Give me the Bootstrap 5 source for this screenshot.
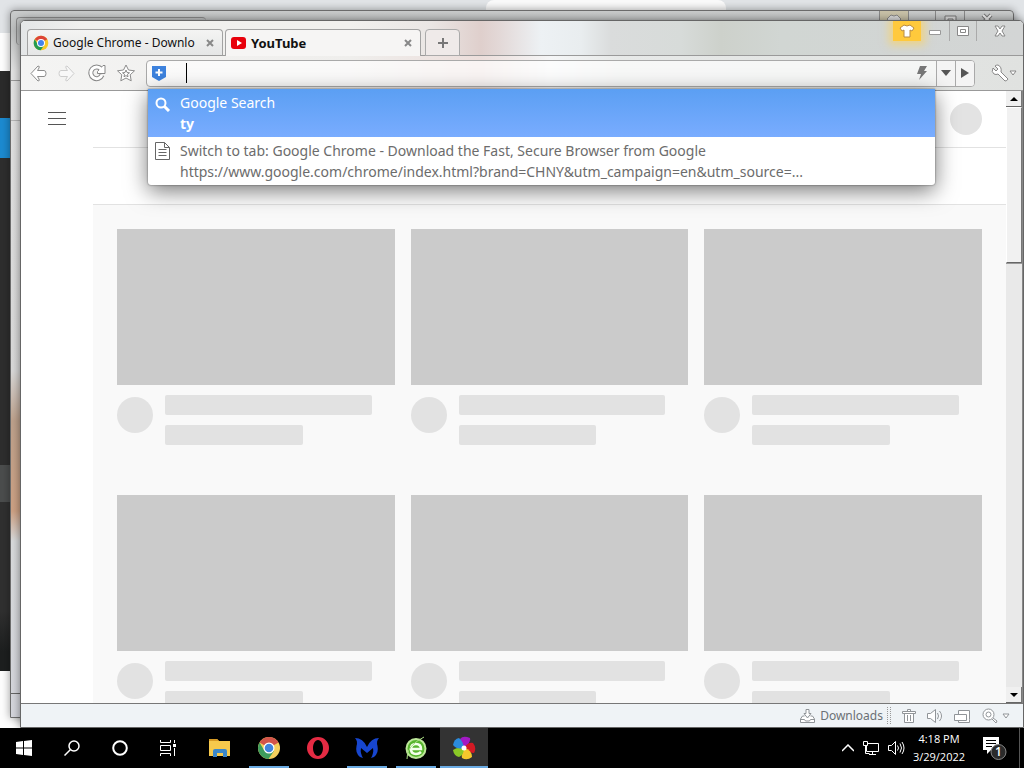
<!DOCTYPE html>
<html lang="en">
<head>
<meta charset="utf-8">
<meta name="viewport" content="width=device-width, initial-scale=1">
<title>YouTube</title>
<link rel="stylesheet" href="https://cdn.jsdelivr.net/npm/bootstrap@5.3.0/dist/css/bootstrap.min.css">
<script src="https://cdn.jsdelivr.net/npm/bootstrap@5.3.0/dist/js/bootstrap.bundle.min.js"></script>
<style>
  body { font-family: "Noto Sans", "Open Sans", sans-serif; font-size: 12px; line-height: 16px; color: #111; }
  button { padding: 0; border: 0; background: none; color: inherit; }
  svg { display: block; flex: none; }
  .stage { background: linear-gradient(#e1e4e7 0 33px, #fdfdfd 33px 100%); }
  .far-page { top: 71px; left: 0; bottom: 57px; width: 60px;
    background: linear-gradient(#2b2b2b 0 47px, #1c8ad0 47px 87px, #2e2e2e 87px 394px, #4b4d4d 394px 431px, #303030 431px 540px, #1d1f1f 580px); }
  .far-tab { top: 0; left: 486px; width: 240px; height: 12px; background: #fafafa; border-radius: 8px 8px 0 0; }
  .back-window { inset: 10px 10px 10px 10px; border: 1px solid #6c6c6c; border-radius: 4px 4px 0 0; box-shadow: 0 0 8px #0006;
    background:
      linear-gradient(#666, #666) 0 682px / 100% 1px no-repeat,
      linear-gradient(#999, #999) 0 69px / 100% 1px no-repeat,
      linear-gradient(#b5b5b5, #b5b5b5) 0 109px / 100% 1px no-repeat,
      linear-gradient(#c9cbcb 0, #bcbebe 20px, #e2e2e2 60px, #d8d8d8 360px, #bda18c 410px, #cda184 500px, #d8dadb 530px, #d4d5dc 100%); }
  .back-tab { top: 6px; left: 5px; width: 190px; height: 28px; border: 1px solid #8a8a8a; border-width: 1px 0 0 1px; border-radius: 4px; }
  .back-controls { top: 0; right: 6px; height: 10px; overflow: hidden; }
  .back-controls span { border-left: 1px solid #888; height: 10px; }
  .back-controls .skin-slot { background: #c9c2a8; }
  .front-window { inset: 20px 0 0 20px; border: 1px solid #666; border-radius: 5px 5px 0 0; box-shadow: 0 0 8px #0007; overflow: hidden; background: #fff; }
  .tab-strip { height: 35px; padding: 8px 0 0 6px; border-bottom: 1px solid #9a9a9a;
    background: linear-gradient(90deg, #e4e6e7 0, #f0f0ee 60px, #f1f0ee 330px, #eae6e4 410px, #dfcfcc 460px, #e3d9d8 480px, #edf1f4 520px, #e9edef 560px, #dadcdc 590px, #d7dbd9 660px, #cdd1cb 700px, #d1d6d3 760px, #d3d5d5 100%); }
  .browser-tab { flex: 0 1 196px; height: 27px; padding: 0 8px 0 5px; border: 1px solid #a2a2a2; border-bottom-color: #999; border-radius: 4px 4px 0 0; background: linear-gradient(#f4f4f3, #e5e6e6); }
  .browser-tab.active { margin: 0 4px 0 2px; background: #f6f5f4; border-bottom: 0; font-size: 13px; font-weight: 700; }
  .new-tab { width: 35px; height: 27px; border: 1px solid #aaa; border-radius: 4px 4px 0 0; background: #efeae9; }
  .tool-row { height: 35px; padding: 0 6px 0 8px; border-bottom: 1px solid #999;
    background: linear-gradient(90deg, #f4f4f3 0, #efeeec 330px, #ecdedb 460px, #f5f6f7 530px, #e7e9e8 600px, #e0e2e0 100%); }
  .nav-icons { width: 106px; margin-right: 11px; }
  .address { height: 27px; border: 1px solid #a9a9a9; border-radius: 4px; background: #fffa; overflow: hidden; }
  .address input { border: 0; background: none; outline: 0; min-width: 0; }
  .caret-bar { width: 1px; height: 20px; margin: 0 4px 0 19px; background: #000; }
  .address .drop-btn { width: 19px; height: 25px; display: grid; place-items: center; background: #f4f4f4; border-left: 1px solid #aaa; }
  .skin-btn { width: 28px; height: 22px; background: #ffc93c; box-shadow: 0 0 8px 4px #ffd25599; }
  .win-controls { top: 0; right: 0; height: 22px; }
  .win-controls button { display: grid; place-items: center; height: 20px; }
  .split-line { border-left: 1px solid #aaa; }
  .suggestions { top: 68px; left: 127px; right: 88px; z-index: 5; border-radius: 0 0 3px 3px; box-shadow: 0 6px 22px #0008, 0 0 2px #0009; background: #fff; overflow: hidden;
    font-family: "Noto Sans", "Open Sans", sans-serif; font-size: 14px; line-height: 21px; }
  .suggestions a { height: 48px; padding: 3px 6px; color: #6c6c6c; border: 0; background: none; }
  .suggestions a.picked { color: #fff; background: linear-gradient(#5b9ff3, #79acff); }
  .guide { width: 72px; flex: none; background: #fff; padding: 19px 0 0 26px; }
  .bar-head { height: 57px; border-bottom: 1px solid #e2e2e2; padding-right: 24px; background: #fff; }
  .avatar { width: 32px; height: 32px; background: #e3e3e3; }
  .feed { background: #f9f9f9; padding: 24px; display: grid; grid-template-columns: repeat(3, 1fr); gap: 50px 16px; align-content: start; }
  .thumb { aspect-ratio: 16 / 9; background: #cbcbcb; }
  .disc { width: 36px; height: 36px; margin-top: 12px; background: #e2e2e2; flex: none; }
  .line-a, .line-b { height: 20px; margin-top: 10px; border-radius: 2px; background: #e2e2e2; }
  .line-a { width: 90%; } .line-b { width: 60%; }
  .scroller { width: 17px; flex: none; background: #e9e9e9; border-right: 1px solid #888; }
  .scroller button { height: 16px; background: #f0f0f0; display: grid; place-items: center; border-bottom: 1px solid #666; border-right: 1px solid #777; }
  .thumb-bar { height: 156px; background: #f1f1f1; border: 1px solid #fff; border-bottom-color: #666; border-right-color: #777; box-shadow: 0 1px #999; }
  .status-row { height: 24px; border-top: 1px solid #777; background: #eff3f6; color: #6b7075; padding-right: 13px; gap: 11px; }
  .status-row svg { stroke: #909498; }
  .grip { width: 4px; height: 17px; border: 1px dotted #999; border-width: 0 1px; }
  .taskbar { height: 40px; background: #000; color: #fff; font-family: "Open Sans", sans-serif; }
  .task-slot { width: 48px; height: 40px; display: grid; place-items: center; }
  .app-slot { width: 49px; padding-bottom: 1px; }
  .task-slot.first-app { margin-left: 3px; }
  .running { background: linear-gradient(#6aaae2, #6aaae2) center bottom / 40px 2px no-repeat; }
  .current { background: linear-gradient(#6aaae2, #6aaae2) center bottom / 100% 2px no-repeat, #333; }
  .clock { width: 60px; line-height: 18px; text-align: center; font-size: 11px; }
  .notify { margin: 0 12px 0 14px; }
  .show-desktop { width: 5px; border-left: 1px solid #555; height: 40px; }
</style>
</head>
<body class="vh-100 d-flex flex-column overflow-hidden">
<div class="stage position-relative flex-grow-1 overflow-hidden">
  <div class="far-page position-absolute"></div>
  <div class="far-tab position-absolute"></div>
  <div class="back-window position-absolute">
    <div class="back-tab position-absolute"></div>
    <div class="back-controls position-absolute d-flex">
      <span class="skin-slot"><svg width="28" height="20" fill="#ddd" stroke="#888"><path d="M7 8l4-4q3 2 6 0l4 4-3 3v7h-8v-7z"/></svg></span>
      <span><svg width="26" height="20"></svg></span>
      <span><svg width="28" height="20" fill="#ddd" stroke="#777"><path d="M9 5h11v8H9zM12 8h5v2h-5z"/></svg></span>
      <span><svg width="42" height="20" stroke="#777"><path d="M18 4l8 8m0-8l-8 8" stroke-width="4"/><path d="M18 4l8 8m0-8l-8 8" stroke="#eee" stroke-width="2"/></svg></span>
    </div>
  </div>

  <section class="front-window position-absolute d-flex flex-column">
    <header class="tab-strip position-relative d-flex flex-shrink-0">
      <div class="browser-tab d-flex align-items-center gap-1">
        <svg width="16" height="16" viewBox="0 0 24 24"><circle cx="12" cy="12" r="11" fill="#f7c928"/><path d="M12 12L2.500 6.500A11 11 0 0 1 21.500 6.500z" fill="#dc4437"/><path d="M2.500 6.500A11 11 0 0 0 11.500 23L17 15 12 12 7 14z" fill="#259b51"/><circle cx="12" cy="12" r="6" fill="#fff"/><circle cx="12" cy="12" r="4.500" fill="#4384ec"/></svg>
        <span class="flex-grow-1 text-nowrap overflow-hidden">Google Chrome - Downlo</span>
        <button type="button" aria-label="Close tab"><svg width="8" height="8" stroke="#888" stroke-width="2"><path d="M1 1l6 6m0-6L1 7"/></svg></button>
      </div>
      <div class="browser-tab active d-flex align-items-center gap-1">
        <svg width="16" height="16" viewBox="0 0 16 16"><rect y="2" width="15" height="12" rx="3" fill="#e8000b"/><path d="M6 5l5 3-5 3z" fill="#fff"/></svg>
        <span class="flex-grow-1">YouTube</span>
        <button type="button" aria-label="Close tab"><svg width="8" height="8" stroke="#888" stroke-width="2"><path d="M1 1l6 6m0-6L1 7"/></svg></button>
      </div>
      <button type="button" class="new-tab" aria-label="New tab"><svg class="m-auto" width="12" height="12" stroke="#777" stroke-width="2"><path d="M6 1v10M1 6h10"/></svg></button>
      <div class="win-controls position-absolute d-flex">
        <button type="button" class="skin-btn" aria-label="Skins"><svg width="18" height="14" viewBox="0 0 18 14" fill="#fff" stroke="#b78b45"><path d="M6 1q3 2 6 0l4 3-2 3-2-1v7H6V6L4 7 2 4z"/></svg></button>
        <button type="button" aria-label="Minimize"><svg width="28" height="8" fill="#fff" stroke="#999"><path d="M8.500 3.500h11v4h-11z"/></svg></button>
        <button type="button" class="split-line" aria-label="Maximize"><svg width="26" height="10" fill="#fff" stroke="#888"><path d="M7.500.5h11v9h-11zM10.500 3.500h5v3h-5z"/></svg></button>
        <button type="button" class="split-line" aria-label="Close"><svg width="46" height="12" fill="#fff" stroke="#888"><path d="M18 1h3l2 3 2-3h3l-3 5 3 5h-3l-2-3-2 3h-3l3-5z"/></svg></button>
      </div>
    </header>

    <nav class="tool-row d-flex align-items-center flex-shrink-0">
      <div class="nav-icons d-flex justify-content-between flex-shrink-0">
        <button type="button" aria-label="Back"><svg width="18" height="18" fill="#fff" stroke="#8b8b8b"><path d="M2 9.500L9 2q2 0 1 2L8.500 6.500H15q2 0 2 3t-2 3H8.500L10 15q1 2-1 2z" stroke-linejoin="round"/></svg></button>
        <button type="button" aria-label="Forward"><svg width="18" height="18" fill="#f8f8f8" stroke="#ccc"><path d="M16 9.500L9 2Q7 2 8 4l1.500 2.500H3q-2 0-2 3t2 3h6.500L8 15q-1 2 1 2z" stroke-linejoin="round"/></svg></button>
        <button type="button" aria-label="Reload"><svg width="18" height="18" fill="none"><path d="M14 11a5.800 5.800 0 1 1-1-6" stroke="#888" stroke-width="5"/><path d="M9.500 9.500h7.500V1.500h-2l-5.500 6z" fill="#fff" stroke="#888"/><path d="M14 11a5.800 5.800 0 1 1-1-6l1 2" stroke="#fff" stroke-width="3"/></svg></button>
        <button type="button" aria-label="Favorites"><svg width="18" height="18" viewBox="0 0 18 18" fill="#fff" stroke="#8b8b8b" stroke-linejoin="round"><path d="M9 1l2.500 5 6 .8-4.300 4 1 6L9 14l-5.200 2.800 1-6L.5 6.800l6-.8z"/><path d="M9 6l1 2.500 2.500.3-2 1.500.5 2.500-2-1.200-2 1.200.5-2.500-2-1.500L8 8.500z"/></svg></button>
      </div>
      <div class="address d-flex align-items-center flex-grow-1 ps-1">
        <svg width="16" height="17" viewBox="0 0 16 17"><path d="M1 1h14v11l-7 4-7-4z" fill="#3d82dd"/><path d="M8 4v7M4.500 7.500h7" stroke="#fff" stroke-width="2"/></svg>
        <div class="caret-bar"></div>
        <input class="flex-grow-1" type="text" aria-label="Address">
        <svg class="me-2" width="12" height="14" fill="#777"><path d="M4 0h7L8 5h3L3 14l2-6H1z"/></svg>
        <button type="button" class="drop-btn" aria-label="History"><svg width="10" height="6" fill="#555"><path d="M0 0h10L5 6z"/></svg></button>
        <button type="button" class="drop-btn" aria-label="Go"><svg width="8" height="10" fill="#555"><path d="M0 0v10l8-5z"/></svg></button>
      </div>
      <button type="button" class="d-flex align-items-center ms-3" aria-label="Tools">
        <svg width="18" height="18" fill="#fff" stroke="#888" stroke-linejoin="round"><path d="M4 2l3 3-2 2-3-3q-2 4 1 6 2 1 4 0l7 7q2 0 3-2L10 8q1-5-3-7-2 0-3 1z"/></svg>
        <svg width="8" height="6" fill="#fff" stroke="#888"><path d="M1 1h6L4 5z"/></svg>
      </button>
    </nav>

    <div class="suggestions position-absolute list-group">
      <a href="#" class="picked list-group-item d-flex gap-2">
        <svg class="mt-1" width="18" height="16" fill="none" stroke="#fff" stroke-width="2"><circle cx="7" cy="7" r="4.500"/><path d="M10 10l5 5" stroke-width="3"/></svg>
        <span>Google Search<br><b>ty</b></span>
      </a>
      <a href="#" class="list-group-item d-flex gap-2">
        <svg width="18" height="21" fill="none" stroke="#666"><path d="M1.500 2.500h9l5 5v12h-14zM10.500 2.500v5h5M4.500 9.500h8m-8 3h8m-8 3h8" stroke-linejoin="round"/></svg>
        <span class="text-nowrap">Switch to tab: Google Chrome - Download the Fast, Secure Browser from Google<br>https://www.google.com/chrome/index.html?brand=CHNY&amp;utm_campaign=en&amp;utm_source=...</span>
      </a>
    </div>

    <div class="d-flex flex-grow-1 overflow-hidden">
      <div class="guide"><button type="button" aria-label="Menu"><svg width="20" height="16" stroke="#555"><path d="M1 2.500h18M1 8.500h18M1 14.500h18"/></svg></button></div>
      <main class="d-flex flex-column flex-grow-1 overflow-hidden">
        <div class="bar-head d-flex align-items-center justify-content-end flex-shrink-0"><div class="avatar rounded-circle"></div></div>
        <div class="bar-head flex-shrink-0"></div>
        <div class="feed flex-grow-1 overflow-hidden">
          <div class="tile"><div class="thumb"></div><div class="d-flex"><div class="disc rounded-circle"></div><div class="flex-grow-1 ms-2 ps-1"><div class="line-a"></div><div class="line-b"></div></div></div></div>
          <div class="tile"><div class="thumb"></div><div class="d-flex"><div class="disc rounded-circle"></div><div class="flex-grow-1 ms-2 ps-1"><div class="line-a"></div><div class="line-b"></div></div></div></div>
          <div class="tile"><div class="thumb"></div><div class="d-flex"><div class="disc rounded-circle"></div><div class="flex-grow-1 ms-2 ps-1"><div class="line-a"></div><div class="line-b"></div></div></div></div>
          <div class="tile"><div class="thumb"></div><div class="d-flex"><div class="disc rounded-circle"></div><div class="flex-grow-1 ms-2 ps-1"><div class="line-a"></div><div class="line-b"></div></div></div></div>
          <div class="tile"><div class="thumb"></div><div class="d-flex"><div class="disc rounded-circle"></div><div class="flex-grow-1 ms-2 ps-1"><div class="line-a"></div><div class="line-b"></div></div></div></div>
          <div class="tile"><div class="thumb"></div><div class="d-flex"><div class="disc rounded-circle"></div><div class="flex-grow-1 ms-2 ps-1"><div class="line-a"></div><div class="line-b"></div></div></div></div>
        </div>
      </main>
      <div class="scroller d-flex flex-column">
        <button type="button" aria-label="Scroll up"><svg width="8" height="4"><path d="M0 4h8L4 0z"/></svg></button>
        <div class="thumb-bar"></div>
        <button type="button" class="mt-auto" aria-label="Scroll down"><svg width="8" height="4"><path d="M0 0h8L4 4z"/></svg></button>
      </div>
    </div>

    <footer class="status-row d-flex align-items-center justify-content-end flex-shrink-0">
      <div class="d-flex align-items-center gap-1">
        <button type="button" class="d-flex align-items-center gap-1"><svg width="17" height="16" fill="#fff"><path d="M3.500 8L1.500 11v3.500h14V11l-2-3h-2M3.500 8h2M1.500 11.500h4l1 1.500h4l1-1.500h4M7 1.500h3v4h2L8.500 10 5 5.500h2z"/></svg>Downloads</button>
        <span class="grip"></span>
      </div>
      <button type="button" aria-label="Clear"><svg width="14" height="16" fill="#fff"><path d="M2.500 5.500h9v9h-9zM.5 3.500h13v2H.5zM5.500 3.500v-2h3v2M5.500 7v6M8.500 7v6"/></svg></button>
      <button type="button" aria-label="Sound"><svg width="16" height="16" fill="#fff"><path d="M.5 5.500h3l5-4v13l-5-4h-3zM10.500 5q2 3 0 6M12.500 3q4 5 0 10"/></svg></button>
      <button type="button" aria-label="Windows"><svg width="17" height="16" fill="#fff"><path d="M4.500 7V2.500h11v9M15.500 11.500v3h-11v-2M.5 6.500h12v6H.5z"/></svg></button>
      <button type="button" class="d-flex align-items-center gap-1" aria-label="Zoom"><svg width="16" height="16" fill="#fff"><circle cx="6.500" cy="6.500" r="5.500"/><circle cx="6.500" cy="6.500" r="2.500"/><path d="M10 11l4 4 1-2-4-3"/></svg><svg width="8" height="6" fill="#fff"><path d="M1 1h6L4 5z"/></svg></button>
    </footer>
  </section>
</div>

<footer class="taskbar d-flex align-items-center flex-shrink-0">
  <button type="button" class="task-slot" aria-label="Start"><svg width="16" height="16" viewBox="0 0 16 16" fill="#fff"><path d="M0 2l7-1v6.500H0zM8 1l8-1v7.500H8zM0 8.500h7V15l-7-1zM8 8.500h8V16l-8-1z"/></svg></button>
  <button type="button" class="task-slot" aria-label="Search"><svg width="16" height="16" fill="none" stroke="#fff" stroke-width="1.500"><circle cx="10" cy="6" r="5"/><path d="M6.500 9.500L.5 15.500"/></svg></button>
  <button type="button" class="task-slot" aria-label="Cortana"><svg width="16" height="16" fill="none" stroke="#fff" stroke-width="2"><circle cx="8" cy="8" r="6.800"/></svg></button>
  <button type="button" class="task-slot" aria-label="Task view"><svg width="16" height="16" fill="none" stroke="#fff"><path d="M.5 0v2.500h10V0M.5 5.500h10v5H.5zM.5 16v-2.500h10V16M14.500 0v3M14.500 8v8"/><path d="M13 4h3v3h-3z" fill="#fff" stroke="none"/></svg></button>
  <button type="button" class="task-slot app-slot first-app" aria-label="File Explorer"><svg width="22" height="18"><path d="M0 0h8l2 2h11v15H0z" fill="#f6c94c"/><path d="M0 0h8l2 2H0z" fill="#d79b25"/><path d="M4 18v-6q0-2 2-2h10q2 0 2 2v6h-4v-4H8v4z" fill="#3b87c9"/></svg></button>
  <button type="button" class="task-slot app-slot running" aria-label="Chrome"><svg width="24" height="24" viewBox="0 0 24 24"><circle cx="12" cy="12" r="11" fill="#f5cf5c"/><path d="M12 12L2.500 6.500A11 11 0 0 1 21.500 6.500z" fill="#d3544a"/><path d="M2.500 6.500A11 11 0 0 0 11.500 23L17 15 12 12 7 14z" fill="#3d9c5d"/><circle cx="12" cy="12" r="5.500" fill="#fff"/><circle cx="12" cy="12" r="4.300" fill="#4184dd"/></svg></button>
  <button type="button" class="task-slot app-slot" aria-label="Opera"><svg width="24" height="24" viewBox="0 0 24 24"><path fill="#e52b43" fill-rule="evenodd" d="M12 1a11 11 0 1 0 0 22 11 11 0 0 0 0-22zm0 3c3 0 5 4 5 8s-2 8-5 8-5-4-5-8 2-8 5-8z"/></svg></button>
  <button type="button" class="task-slot app-slot running" aria-label="Malwarebytes"><svg width="24" height="24" viewBox="0 0 24 24" fill="#1746cf"><path d="M0 2Q8 2 12 11 16 2 24 2q-3 3-1.500 8 1.500 7-3.500 11l-3 1q3-5 2-10l-6 5-6-5q-1 5 2 10l-3-1Q0 17 1.500 10 3 5 0 2z"/></svg></button>
  <button type="button" class="task-slot app-slot running" aria-label="Browser"><svg width="24" height="24" viewBox="0 0 24 24" fill="none"><circle cx="12" cy="12.500" r="9.500" fill="#58b52e" stroke="#bde79a" stroke-width="2"/><path d="M7 13h10q0-5-5-5t-5 5 5 5q3 0 5-2" stroke="#f4ffeb" stroke-width="2.500"/><path d="M3 23Q2 10 20 1" stroke="#a9dc83"/></svg></button>
  <button type="button" class="task-slot current" aria-label="Maxthon"><svg width="24" height="24" viewBox="0 0 24 24"><path d="M12 12L8 3q3-4 10-1 1 5-6 10z" fill="#a31ac4"/><path d="M12 12q4-6 9-5 4 5 1 10-5 0-10-5z" fill="#d31a24"/><path d="M12 12q8 2 8 9-5 4-10 1-1-4 2-10z" fill="#f4c72c"/><path d="M12 12q0 7-5 9-5-1-6-7 4-3 11-2z" fill="#8ac926"/><path d="M12 12Q5 14 1 9q1-6 6-7 4 3 5 10z" fill="#2b8bdd"/><circle cx="12" cy="12" r="2.500" fill="#fff"/></svg></button>

  <div class="d-flex align-items-center ms-auto">
    <button type="button" aria-label="Show hidden icons"><svg width="12" height="8" fill="none" stroke="#fff" stroke-width="1.500"><path d="M0 7l6-6 6 6"/></svg></button>
    <button type="button" class="ms-2" aria-label="Network"><svg width="18" height="16" fill="none" stroke="#fff"><path d="M6 3.500h10.500v8H4.500V6M1.500 1.500h4v4h-4zM3.500 6v7.500h4M7 14.500h7M10.500 12v2"/></svg></button>
    <button type="button" class="ms-2" aria-label="Volume"><svg width="17" height="16" fill="none" stroke="#fff"><path d="M.5 5.500h3l4-4v13l-4-4h-3zM9.500 5.500q2 2.500 0 5M12 3.500q3 4.500 0 9M14 2q4 6 0 12"/></svg></button>
    <div class="clock ms-1">4:18 PM<br>3/29/2022</div>
    <button type="button" class="notify" aria-label="Notifications"><svg width="24" height="24"><path d="M0 1h16v13H8l-4 4v-4H0z" fill="#fff"/><path d="M3 4.500h10M3 7.500h10M3 10.500h6" stroke="#000"/><circle cx="15.500" cy="16" r="7.500" fill="#2b2b2b" stroke="#888"/><text x="15.500" y="20" text-anchor="middle" font-size="12" font-weight="600" fill="#fff">1</text></svg></button>
    <div class="show-desktop"></div>
  </div>
</footer>
</body>
</html>
